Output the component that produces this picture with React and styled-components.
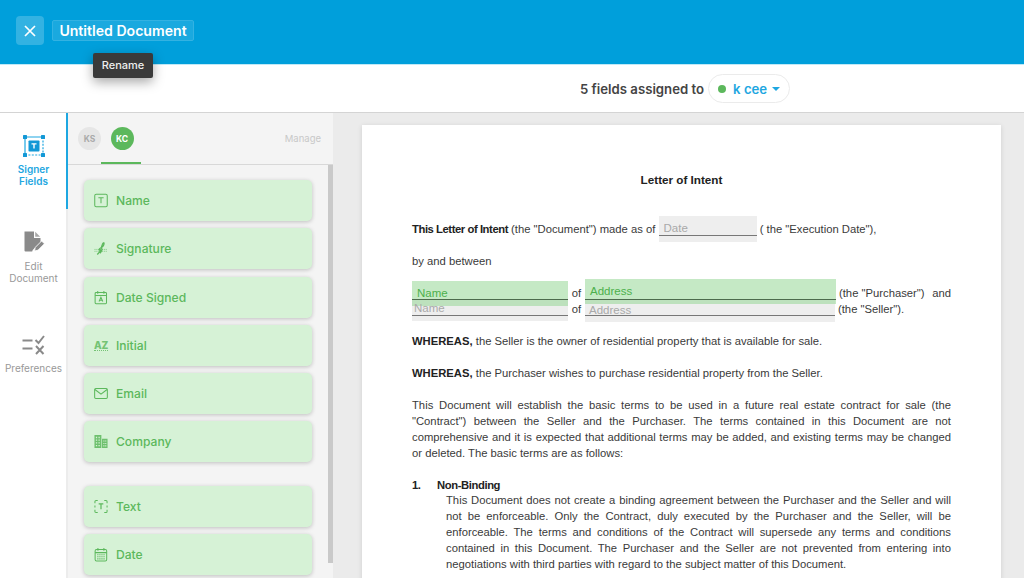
import styled, { createGlobalStyle } from "styled-components";

const GlobalStyle = createGlobalStyle`
  html, body {
    margin: 0;
    padding: 0;
    height: 578px;
    overflow: hidden;
    background: #fff;
    font-family: "Inter", "Noto Sans", sans-serif;
  }
  * {
    box-sizing: border-box;
  }
`;

const Page = styled.div`
  display: flex;
  flex-direction: column;
  width: 1024px;
  height: 578px;
  overflow: hidden;
`;

const Header = styled.header`
  display: flex;
  flex: none;
  align-items: center;
  gap: 8px;
  height: 65px;
  padding: 0 0 3px 16px;
  background: #009fdb;
  border-bottom: 1px solid #bfe9f7;
`;

const CloseButton = styled.button`
  display: flex;
  align-items: center;
  justify-content: center;
  width: 28px;
  height: 29px;
  padding: 0;
  color: #fff;
  background: #33b2e2;
  border: 0;
  border-radius: 4px;
`;

const TitleWrap = styled.div`
  position: relative;
`;

const Title = styled.div`
  width: 142px;
  height: 21px;
  font-size: 14.1px;
  font-weight: 600;
  line-height: 20px;
  text-align: center;
  white-space: nowrap;
  color: #fff;
  background: #1aa9df;
  border: 1px solid #33b2e2;
  border-radius: 2px;
`;

const Tooltip = styled.div`
  position: absolute;
  top: 33px;
  left: 41px;
  z-index: 2;
  width: 60px;
  height: 25px;
  font-size: 11px;
  font-weight: 500;
  line-height: 25px;
  text-align: center;
  color: #eee;
  background: #3a3a3a;
  border-radius: 2px;
  box-shadow: 0 4px 12px rgba(0, 0, 0, 0.35);
`;

const AssignBar = styled.div`
  display: flex;
  flex: none;
  align-items: center;
  gap: 4px;
  height: 48px;
  padding-left: 580px;
  background: #fff;
  border-bottom: 1px solid #d4d4d4;
`;

const AssignText = styled.span`
  font-size: 13.2px;
  font-weight: 600;
  color: #444;
`;

const AssigneePill = styled.div`
  display: flex;
  align-items: center;
  width: 82px;
  height: 29px;
  padding-left: 9px;
  font-size: 13.2px;
  font-weight: 600;
  color: #1ea7e1;
  background: #fff;
  border: 1px solid #ebebeb;
  border-radius: 15px;
`;

const StatusDot = styled.span`
  width: 8px;
  height: 8px;
  margin-right: 7px;
  background: #5cb85c;
  border-radius: 50%;
`;

const Caret = styled.span`
  width: 0;
  height: 0;
  margin-left: 5px;
  border-top: 4px solid #1ea7e1;
  border-right: 4px solid transparent;
  border-left: 4px solid transparent;
`;

const Body = styled.div`
  display: flex;
  flex: 1;
  min-height: 0;
`;

const SideNav = styled.nav`
  flex: none;
  width: 68px;
  background: #fff;
`;

const NavItem = styled.div`
  display: flex;
  flex-direction: column;
  align-items: center;
  justify-content: center;
  gap: 6.5px;
  height: ${({ $active }) => ($active ? "96px" : "97px")};
  padding-left: 1px;
  font-size: 10px;
  line-height: 12px;
  text-align: center;
  color: ${({ $active }) => ($active ? "#1ea7e1" : "#999")};
  font-weight: ${({ $active }) => ($active ? 600 : 400)};
  border-right: 2px solid ${({ $active }) => ($active ? "#1ea7e1" : "#ececec")};
`;

const Panel = styled.aside`
  display: flex;
  flex: none;
  flex-direction: column;
  width: 265px;
  background: #f4f4f4;
`;

const Tabs = styled.div`
  display: flex;
  flex: none;
  align-items: flex-start;
  height: 52px;
  padding: 14px 12px 0 10px;
  border-bottom: 1px solid #d8d8d8;
`;

const Tab = styled.div`
  position: relative;
  display: flex;
  align-items: center;
  justify-content: center;
  width: 23px;
  height: 23px;
  margin-right: ${({ $active }) => ($active ? "0" : "9.5px")};
  font-size: 8.5px;
  font-weight: 700;
  color: ${({ $active }) => ($active ? "#fff" : "#aaa")};
  background: ${({ $active }) => ($active ? "#5cb85c" : "#e6e6e6")};
  border-radius: 50%;

  &::after {
    display: ${({ $active }) => ($active ? "block" : "none")};
    position: absolute;
    top: 35px;
    left: -9.5px;
    width: 40px;
    height: 2px;
    content: "";
    background: #5cb85c;
  }
`;

const Manage = styled.span`
  margin: 6px 0 0 auto;
  font-size: 9.5px;
  color: #c8c8c8;
`;

const PanelBody = styled.div`
  display: flex;
  flex: 1;
  min-height: 0;
  overflow: hidden;
`;

const FieldList = styled.div`
  display: flex;
  flex: 1;
  flex-direction: column;
  padding: 15px 16px 0;
`;

const FieldGroup = styled.div`
  display: flex;
  flex: none;
  flex-direction: column;
  gap: 7.25px;
  margin-bottom: ${({ $spaced }) => ($spaced ? "23.5px" : "0")};
`;

const FieldCard = styled.div`
  display: flex;
  flex: none;
  align-items: center;
  gap: 8px;
  height: 41px;
  padding-left: 10px;
  font-size: 12.1px;
  font-weight: 500;
  color: #5cb85c;
  background: #d6f2d6;
  border-radius: 5px;
  box-shadow: 0 1px 4px rgba(0, 0, 0, 0.22);
`;

const IconSlot = styled.span`
  display: flex;
  flex: none;
  align-items: center;
  justify-content: center;
  width: 14px;
  height: 14px;
`;

const AzMark = styled.span`
  font-size: 10px;
  font-weight: 800;
  line-height: 1;
  letter-spacing: -0.3px;
  opacity: 0.8;
  border-bottom: 1px dotted currentColor;
`;

const Scrollbar = styled.div`
  flex: none;
  width: 5px;
  height: 398px;
  background: #c9c9c9;
`;

const DocArea = styled.main`
  flex: 1;
  min-width: 0;
  padding: 12px 23px 0 29px;
  overflow: hidden;
  background: #ebebeb;
`;

const Paper = styled.article`
  height: 500px;
  padding: 47px 50px 0;
  overflow: hidden;
  font-family: "Liberation Sans", Arial, sans-serif;
  font-size: 11.25px;
  line-height: 16px;
  color: #3a3a3a;
  background: #fff;
  box-shadow: 0 1px 5px rgba(0, 0, 0, 0.12);
`;

const DocTitle = styled.h1`
  margin: 0 0 34px;
  font-size: 11.7px;
  font-weight: 700;
  line-height: 15px;
  text-align: center;
  color: #222;
`;

const Para = styled.p`
  height: ${({ $lines }) => ($lines || 1) * 16}px;
  margin: 0 0 16px;
  text-align: ${({ $justify }) => ($justify ? "justify" : "left")};
`;

const Strong = styled.b`
  font-weight: 700;
  color: #222;
`;

const TightStrong = styled(Strong)`
  letter-spacing: -0.43px;
`;

const Parties = styled.div`
  margin-bottom: 16px;
`;

const PartyRow = styled.div`
  display: flex;
  align-items: center;
  height: 16px;
`;

const Of = styled.span`
  flex: none;
  width: 17px;
  text-align: center;
`;

const PartyNote = styled.span`
  display: flex;
  flex: 1;
  justify-content: space-between;
  margin-left: 3px;
`;

const Blank = styled.span`
  position: relative;
  display: inline-block;
  flex: none;
  width: ${({ $width }) => $width}px;
  height: 14px;
  padding-left: ${({ $inset }) => $inset || 3}px;
  font-size: 11.5px;
  line-height: 13px;
  vertical-align: ${({ $raise }) => $raise || 0}px;
  color: ${({ $tone }) => ($tone === "green" ? "#4cb04c" : "#a9a9a9")};

  &::before {
    position: absolute;
    top: ${({ $top }) => $top}px;
    right: 0;
    bottom: ${({ $bottom }) => $bottom}px;
    left: 0;
    z-index: ${({ $tone }) => ($tone === "green" ? 1 : 0)};
    content: "";
    pointer-events: none;
    background: ${({ $tone }) =>
      $tone === "green" ? "rgba(150, 215, 150, 0.55)" : "#eeeeee"};
  }

  &::after {
    position: absolute;
    right: 0;
    bottom: 0;
    left: 0;
    z-index: 3;
    height: 1px;
    content: "";
    background: ${({ $tone }) => ($tone === "green" ? "#4d6b4d" : "#777")};
  }
`;

const BlankText = styled.span`
  position: relative;
  z-index: 2;
  display: inline-block;
  transform: translateY(${({ $shift }) => $shift || 0}px);
`;

const ListHead = styled.div`
  display: flex;
  height: 15px;
  font-weight: 700;
  letter-spacing: -0.4px;
  color: #222;
`;

const ListNumber = styled.span`
  width: 25px;
`;

const ListBody = styled.p`
  margin: 0 0 0 34px;
  text-align: justify;
`;

const GreenSvg = ({ children }) => (
  <svg width="15" height="15" viewBox="0 0 15 15" fill="none" stroke="currentColor" strokeWidth="1.1">
    {children}
  </svg>
);

const fieldIcons = {
  name: (
    <GreenSvg>
      <rect x="0.8" y="0.8" width="13.4" height="13.4" rx="1.5" />
      <path d="M4.7 4.5h5.6M7.5 4.5v6" />
    </GreenSvg>
  ),
  signature: (
    <GreenSvg>
      <path d="M0.500 8.500h14M0.500 10.500h14" strokeWidth="1" strokeDasharray="1.200 .8" opacity="0.65" />
      <path d="M3.500 14C5 12.500 6.500 11 7 9.500s-2 .5-1.500-1S9 6.500 10 4.500s1-3.500 0-3-1.500 3-2 4.500 1 1.500.5 3S7 12 6.500 12.500" strokeWidth="1.400" />
    </GreenSvg>
  ),
  dateSigned: (
    <GreenSvg>
      <rect x="1.2" y="2.2" width="12.2" height="12" rx="1" />
      <path d="M1.2 5.400h12.200M4 .6v3M10.600.6v3M5.400 11.800l2-4.600 2 4.600M6 10.400h2.800" />
    </GreenSvg>
  ),
  email: (
    <GreenSvg>
      <rect x="0.7" y="2.2" width="13.6" height="10.6" rx="1.2" />
      <path d="M1 3.200l6.500 5 6.500-5" />
    </GreenSvg>
  ),
  company: (
    <svg width="15" height="15" viewBox="0 0 15 15" fill="currentColor" opacity="0.85">
      <path d="M.5.500h7.400v14H.5zM8.600 4.500h5.900v10H8.600z" />
      <path
        d="M2 2.500h1.400v1.400H2zM4.800 2.500h1.400v1.400H4.800zM2 5.400h1.400v1.400H2zM4.800 5.400h1.400v1.400H4.800zM2 8.300h1.400v1.400H2zM4.800 8.300h1.400v1.400H4.800zM2 11.200h1.400v1.400H2zM4.800 11.200h1.400v1.400H4.800zM10 6.400h1.200v1.200H10zM12 6.400h1.200v1.200H12zM10 9h1.200v1.200H10zM12 9h1.200v1.200H12zM10 11.600h1.200v1.200H10zM12 11.600h1.200v1.200H12z"
        fill="#d6f2d6"
      />
    </svg>
  ),
  text: (
    <GreenSvg>
      <path d="M1 4V2.200C1 1.500 1.500 1 2.200 1H4M11 1h1.800c.7 0 1.200.5 1.200 1.200V4M14 11v1.800c0 .7-.5 1.200-1.200 1.200H11M4 14H2.200C1.500 14 1 13.500 1 12.800V11M1 6.500v2M14 6.500v2" />
      <path d="M5 4.700h5M7.500 4.700v5.800" strokeWidth="1.300" />
    </GreenSvg>
  ),
  date: (
    <svg width="15" height="15" viewBox="0 0 15 15" fill="none" stroke="currentColor" strokeWidth="1.1">
      <rect x="1.200" y="2.200" width="12.400" height="12.200" rx="1.500" />
      <path d="M1.200 5.500h12.400M4.200.600v3M10.600.600v3" />
      <path d="M3.500 7.800h8M3.500 10h8M3.500 12.200h8" strokeDasharray="1.300 .9" />
    </svg>
  ),
};

const primaryFields = [
  ["Name", "name"],
  ["Signature", "signature"],
  ["Date Signed", "dateSigned"],
  ["Initial", "initial"],
  ["Email", "email"],
  ["Company", "company"],
];

const extraFields = [
  ["Text", "text"],
  ["Date", "date"],
];

const Field = ({ label, icon }) => (
  <FieldCard>
    <IconSlot>{icon === "initial" ? <AzMark>AZ</AzMark> : fieldIcons[icon]}</IconSlot>
    {label}
  </FieldCard>
);

const CloseIcon = () => (
  <svg width="14" height="14" viewBox="0 0 14 14" fill="none" stroke="currentColor" strokeWidth="1.700">
    <path d="M2 2l10 10M12 2L2 12" />
  </svg>
);

const SignerIcon = () => (
  <svg width="22" height="22" viewBox="0 0 22 22">
    <path d="M2 2h18M2 2v18" fill="none" stroke="#1ea7e1" strokeWidth="1.200" />
    <path d="M20 2v18M2 20h18" fill="none" stroke="#1ea7e1" strokeWidth="1.200" strokeDasharray="2 1.400" />
    <rect x="0" y="0" width="4" height="4" rx="0.600" fill="#1298d6" />
    <rect x="18" y="0" width="4" height="4" rx="0.600" fill="#1298d6" />
    <rect x="0" y="18" width="4" height="4" rx="0.600" fill="#1298d6" />
    <rect x="18" y="18" width="4" height="4" rx="0.600" fill="#1298d6" />
    <rect x="5.500" y="5.500" width="11" height="11" rx="0.800" fill="#1298d6" />
    <path d="M8.500 8.300h5v1.200h-1.800v4h-1.400v-4H8.500z" fill="#fff" />
  </svg>
);

const EditIcon = () => (
  <svg width="22" height="22" viewBox="0 0 22 22">
    <path d="M1.500 0.500h9.500v6.500h6.500v4.200l-7.800 7.900-.5 1.400H2.500a1 1 0 0 1-1-1z" fill="#8a8a8a" />
    <path d="M12.200 0.800l5 5h-5z" fill="#a8a8a8" />
    <path d="M11.500 20l.8-3.700 6.300-6.300 2.800 2.800-6.300 6.300z" fill="#8a8a8a" stroke="#fff" strokeWidth="0.800" />
  </svg>
);

const PreferencesIcon = () => (
  <svg width="23" height="20" viewBox="0 0 23 20" fill="none" stroke="#8a8a8a" strokeWidth="2">
    <path d="M0.500 5.500h10M0.500 13.500h10" />
    <path d="M13.500 5l3 3 5.500-7M14 11l7.500 8M21.500 11L14 19" />
  </svg>
);

const App = () => (
  <Page>
    <GlobalStyle />
    <Header>
      <CloseButton aria-label="Close">
        <CloseIcon />
      </CloseButton>
      <TitleWrap>
        <Title>Untitled Document</Title>
        <Tooltip>Rename</Tooltip>
      </TitleWrap>
    </Header>

    <AssignBar>
      <AssignText>5 fields assigned to</AssignText>
      <AssigneePill>
        <StatusDot />
        k cee
        <Caret />
      </AssigneePill>
    </AssignBar>

    <Body>
      <SideNav>
        <NavItem $active>
          <SignerIcon />
          <span>
            Signer
            <br />
            Fields
          </span>
        </NavItem>
        <NavItem>
          <EditIcon />
          <span>
            Edit
            <br />
            Document
          </span>
        </NavItem>
        <NavItem>
          <PreferencesIcon />
          <span>Preferences</span>
        </NavItem>
        <NavItem />
        <NavItem />
      </SideNav>

      <Panel>
        <Tabs>
          <Tab>KS</Tab>
          <Tab $active>KC</Tab>
          <Manage>Manage</Manage>
        </Tabs>
        <PanelBody>
          <FieldList>
            <FieldGroup $spaced>
              {primaryFields.map(([label, icon]) => (
                <Field key={label} label={label} icon={icon} />
              ))}
            </FieldGroup>
            <FieldGroup>
              {extraFields.map(([label, icon]) => (
                <Field key={label} label={label} icon={icon} />
              ))}
            </FieldGroup>
          </FieldList>
          <Scrollbar />
        </PanelBody>
      </Panel>

      <DocArea>
        <Paper>
          <DocTitle>Letter of Intent</DocTitle>
          <Para>
            <TightStrong>This Letter of Intent</TightStrong> (the "Document") made as of{" "}
            <Blank $width={98} $tone="grey" $top={-6} $bottom={-6} $inset={5} $raise={1}>
              <BlankText>Date</BlankText>
            </Blank>{" "}
            ( the "Execution Date"),
          </Para>
          <Para>by and between</Para>
          <Parties>
            <PartyRow>
              <Blank $width={156} $tone="green" $top={-5} $bottom={-6} $inset={5}>
                <BlankText $shift={1}>Name</BlankText>
              </Blank>
              <Of>of</Of>
              <Blank $width={251} $tone="green" $top={-7} $bottom={-4} $inset={5}>
                <BlankText $shift={-1}>Address</BlankText>
              </Blank>
              <PartyNote>
                <span>(the "Purchaser")</span>
                <span>and</span>
              </PartyNote>
            </PartyRow>
            <PartyRow>
              <Blank $width={156} $tone="grey" $top={-2} $bottom={-5} $inset={2}>
                <BlankText>Name</BlankText>
              </Blank>
              <Of>of</Of>
              <Blank $width={250} $tone="grey" $top={-2} $bottom={-6} $inset={4}>
                <BlankText $shift={2}>Address</BlankText>
              </Blank>
              <PartyNote>
                <span>(the "Seller").</span>
              </PartyNote>
            </PartyRow>
          </Parties>
          <Para>
            <Strong>WHEREAS,</Strong> the Seller is the owner of residential property that is available for sale.
          </Para>
          <Para>
            <Strong>WHEREAS,</Strong> the Purchaser wishes to purchase residential property from the Seller.
          </Para>
          <Para $justify $lines={4}>
            This Document will establish the basic terms to be used in a future real estate contract for sale (the
            "Contract") between the Seller and the Purchaser. The terms contained in this Document are not
            comprehensive and it is expected that additional terms may be added, and existing terms may be changed
            or deleted. The basic terms are as follows:
          </Para>
          <ListHead>
            <ListNumber>1.</ListNumber>
            Non-Binding
          </ListHead>
          <ListBody>
            This Document does not create a binding agreement between the Purchaser and the Seller and will
            not be enforceable. Only the Contract, duly executed by the Purchaser and the Seller, will be
            enforceable. The terms and conditions of the Contract will supersede any terms and conditions
            contained in this Document. The Purchaser and the Seller are not prevented from entering into
            negotiations with third parties with regard to the subject matter of this Document.
          </ListBody>
        </Paper>
      </DocArea>
    </Body>
  </Page>
);

export default App;
